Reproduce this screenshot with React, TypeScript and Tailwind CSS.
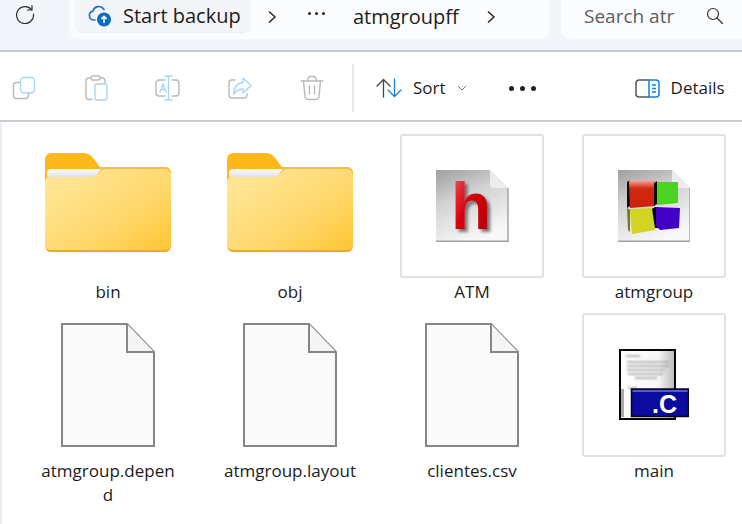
import type { ReactNode } from "react";

const GREY = "#b9b9b9";
const BLUE = "#a9d4f5";

function ToolIcon({ children }: { children: ReactNode }) {
	return (
		<svg width="26" height="26" viewBox="0 0 26 26" fill="none" strokeWidth="1.400" strokeLinecap="round" strokeLinejoin="round">
			{children}
		</svg>
	);
}

function CopyIcon() {
	return (
		<ToolIcon>
			<path d="M9 7.500H5.500A3 3 0 0 0 2.500 10.500V20.500A3 3 0 0 0 5.500 23.500H14.500A3 3 0 0 0 17.500 20.500V18" stroke={GREY} />
			<rect x="9.500" y="2.500" width="14" height="15.500" rx="3.500" stroke={BLUE} />
		</ToolIcon>
	);
}

function PasteIcon() {
	return (
		<ToolIcon>
			<path d="M9 24.500H6A3 3 0 0 1 3 21.500V6A3 3 0 0 1 6 3H8M17 3H19A3 3 0 0 1 22 6V8" stroke={GREY} />
			<rect x="8" y="1" width="9" height="4" rx="1.500" stroke={GREY} />
			<rect x="12" y="9" width="12" height="16" rx="2" stroke={BLUE} />
		</ToolIcon>
	);
}

function RenameIcon() {
	return (
		<ToolIcon>
			<path d="M10 5H4A3 3 0 0 0 1 8V18A3 3 0 0 0 4 21H10M17 5H21A3 3 0 0 1 24 8V18A3 3 0 0 1 21 21H17" stroke={GREY} />
			<path d="M10 1H17M13.500 1V25M10 25H17" stroke={BLUE} />
			<path d="M5 17L8 9L11 17M6 14.500H10" stroke={BLUE} />
		</ToolIcon>
	);
}

function ShareIcon() {
	return (
		<ToolIcon>
			<path d="M8 5H5A3 3 0 0 0 2 8V20A3 3 0 0 0 5 23H17A3 3 0 0 0 20 20V19" stroke={GREY} />
			<path d="M16 3L24 10.500L16 18V14C11 14 9 15.500 6.500 19C7 12.500 10 8 16 7.500Z" stroke={BLUE} />
		</ToolIcon>
	);
}

function TrashIcon() {
	return (
		<ToolIcon>
			<path d="M2 6H24M9 6V4A2.500 2.500 0 0 1 11.500 1.500H14.500A2.500 2.500 0 0 1 17 4V6" stroke={GREY} />
			<path d="M4.500 6L6 22A3 3 0 0 0 9 24.500H17A3 3 0 0 0 20 22L21.500 6M10.500 11V19M15.500 11V19" stroke={GREY} />
		</ToolIcon>
	);
}

function Folder({ id }: { id: string }) {
	return (
		<svg width="126" height="99" viewBox="0 0 126 99" className="mt-[19px]">
			<defs>
				<linearGradient id={`front-${id}`} x1="0.05" y1="0.1" x2="0.95" y2="0.95">
					<stop offset="0" stopColor="#ffe698" />
					<stop offset="0.6" stopColor="#ffd86c" />
					<stop offset="1" stopColor="#ffc738" />
				</linearGradient>
				<linearGradient id={`paper-${id}`} x1="0" y1="0" x2="0" y2="1">
					<stop offset="0" stopColor="#fbfbfb" />
					<stop offset="1" stopColor="#e2e2e2" />
				</linearGradient>
			</defs>
			<path d="M0 6A6 6 0 0 1 6 0H38C43 0 46 2 49 6L55 14H120A6 6 0 0 1 126 20V30H0Z" fill="#fdb91b" />
			<path d="M55 14H120A6 6 0 0 1 126 20V30H45Z" fill="#f5bd46" />
			<path d="M2 24V20A4 4 0 0 1 6 16H56L50 24Z" fill={`url(#paper-${id})`} />
			<path d="M0 99V29A5 5 0 0 1 5 24H45C49 24 52 22 55 19C56 18 57 16 60 16H120A6 6 0 0 1 126 22V93A6 6 0 0 1 120 99H6A6 6 0 0 1 0 93Z" fill={`url(#front-${id})`} />
			<path d="M0 92V93A6 6 0 0 0 6 99H120A6 6 0 0 0 126 93V92A5 5 0 0 1 121 97H5A5 5 0 0 1 0 92Z" fill="#eaaa2d" />
		</svg>
	);
}

function BlankDoc() {
	return (
		<svg width="94" height="124" viewBox="0 0 94 124" className="mt-[10px]">
			<path d="M1 1H66L93 29V123H1Z" fill="#fafafa" stroke="#868684" strokeWidth="2" />
			<path d="M66 1V29H93" fill="#f5f5f5" stroke="#868684" strokeWidth="2" />
		</svg>
	);
}

function PageBack({ id }: { id: string }) {
	return (
		<>
			<defs>
				<linearGradient id={`page-${id}`} x1="0.1" y1="0" x2="0.5" y2="1">
					<stop offset="0" stopColor="#a3a3a3" />
					<stop offset="0.4" stopColor="#d2d2d2" />
					<stop offset="1" stopColor="#f8f8f8" />
				</linearGradient>
			</defs>
			<path d="M0 0H54L72 18V72H0Z" fill={`url(#page-${id})`} />
			<path d="M54 0L72 18H57Q54 18 54 15Z" fill="#ececec" />
			<path d="M72 18V72" stroke="#a5a5a5" strokeWidth="1.500" />
			<rect x="0" y="70.500" width="72" height="1.500" fill="#a0a0a0" />
		</>
	);
}

function HeaderFileIcon() {
	return (
		<svg width="72" height="72" viewBox="0 0 72 72" className="overflow-visible">
			<defs>
				<linearGradient id="h-red" x1="0" y1="0" x2="1" y2="1">
					<stop offset="0" stopColor="#f0606a" />
					<stop offset="0.45" stopColor="#d8000c" />
					<stop offset="1" stopColor="#a80008" />
				</linearGradient>
				<filter id="h-shadow" x="-30%" y="-30%" width="170%" height="170%">
					<feDropShadow dx="3" dy="3" stdDeviation="1.800" floodColor="#444" floodOpacity="0.7" />
				</filter>
			</defs>
			<PageBack id="h" />
			<text x="15" y="59" fontFamily="'Liberation Sans', sans-serif" fontWeight="700" fontSize="66" fill="url(#h-red)" filter="url(#h-shadow)">h</text>
		</svg>
	);
}

function ProjectFileIcon() {
	return (
		<svg width="72" height="72" viewBox="0 0 72 72">
			<defs>
				<linearGradient id="red-top" x1="0" y1="0" x2="0" y2="1">
					<stop offset="0" stopColor="#f4b0a8" />
					<stop offset="0.3" stopColor="#d32a12" />
					<stop offset="1" stopColor="#cc200c" />
				</linearGradient>
				<filter id="cube-soft">
					<feGaussianBlur stdDeviation="0.400" />
				</filter>
			</defs>
			<PageBack id="p" />
			<g filter="url(#cube-soft)">
				<path d="M9 12L12 10V36L9 38Z" fill="#111" />
				<path d="M11 11Q11 10 13 10H37V36L12 38Z" fill="url(#red-top)" />
				<path d="M36 13L39 11V34L36 36Z" fill="#111" />
				<path d="M39 12H60V33L39 35Z" fill="#48d424" />
				<path d="M9 38L12 40V62L10 60Z" fill="#7a7a10" />
				<path d="M12 39L37 38V60L14 64Z" fill="#d2d320" />
				<path d="M34 39L37 37H40V58L37 58Z" fill="#050505" />
				<path d="M38 37L62 38L61 58L42 60L38 56Z" fill="#4200c4" />
			</g>
		</svg>
	);
}

function SourceFileIcon() {
	return (
		<svg width="70" height="72" viewBox="0 0 70 72">
			<defs>
				<linearGradient id="c-page" x1="0" y1="0" x2="1" y2="0">
					<stop offset="0" stopColor="#ffffff" />
					<stop offset="0.7" stopColor="#f6f6f6" />
					<stop offset="1" stopColor="#b9b9b9" />
				</linearGradient>
				<filter id="lines">
					<feGaussianBlur stdDeviation="0.800" />
				</filter>
			</defs>
			<rect x="1" y="1" width="55" height="69" fill="url(#c-page)" stroke="#050505" strokeWidth="2" />
			<g stroke="#a0a0a0" strokeWidth="1.500" filter="url(#lines)">
				<path d="M7 7H21M8 13H50M8 17H50M8 21H46M9 25H44M16 29H38M9 39H18" />
			</g>
			<rect x="2" y="40" width="3" height="28" fill="#a9a9a9" />
			<rect x="12.500" y="40" width="57" height="27.500" fill="#0b0ba0" stroke="#060618" strokeWidth="1.500" />
			<rect x="13.500" y="41" width="55" height="2" fill="#5a5ac4" />
			<text x="33" y="64" fontFamily="'Liberation Sans', sans-serif" fontWeight="700" fontSize="25" fill="#ffffff">.C</text>
		</svg>
	);
}

function Item({ name, icon, tile }: { name: ReactNode; icon: ReactNode; tile?: boolean }) {
	return (
		<div className="flex h-[179px] w-[144px] flex-col items-center">
			<div className={`flex h-[144px] w-[144px] shrink-0 justify-center ${tile ? "items-center rounded-[3px] border-2 border-[#e2e2e2]" : "items-start"}`}>
				{icon}
			</div>
			<div className="mt-[2px] text-center text-[17px] leading-[24px] text-[#1b1b1b]">{name}</div>
		</div>
	);
}

export default function App() {
	return (
		<div className="h-[524px] w-[742px] overflow-hidden bg-white font-['Open_Sans','Noto_Sans',sans-serif] text-[#1c1c1c]">
			{/* address bar */}
			<div className="flex h-[52px] border-b-2 border-[#c7cbd4] bg-[#f2f5f9]">
				<div className="flex h-[28px] w-[70px] items-center justify-center">
					<svg width="20" height="20" viewBox="0 0 20 20" fill="none" stroke="#303030" strokeWidth="1.200" className="ml-[-20px]">
						<path d="M16.500 5.500A8.500 8.500 0 1 0 18.500 10" strokeLinecap="round" />
						<path d="M17 1.500V6H12.500" strokeLinecap="round" strokeLinejoin="round" />
					</svg>
				</div>
				<div className="flex h-[39px] w-[479px] rounded-b-lg bg-[#fbfcfe] pl-[5px]">
					<div className="flex h-[33px] w-[176px] items-center rounded-b-lg border-b border-[#e9ebee] bg-[#f3f5f8] pl-[13px]">
						<svg width="24" height="22" viewBox="0 0 24 22" fill="none">
							<path d="M7 15H5.500A4.500 4.500 0 0 1 5 6.100A6 6 0 0 1 16 4.500" stroke="#1a73c8" strokeWidth="1.600" strokeLinecap="round" />
							<circle cx="16" cy="14.500" r="7" fill="#0a6cc4" />
							<path d="M16 18V11.500M13.300 14L16 11.300L18.700 14" stroke="#ffffff" strokeWidth="1.600" />
						</svg>
						<span className="ml-[11px] text-[20px] leading-none">Start backup</span>
					</div>
					<div className="flex h-[33px] items-center">
						<svg width="10" height="14" viewBox="0 0 10 14" fill="none" stroke="#222" strokeWidth="1.400" className="ml-[16px]">
							<path d="M2 1.500L8 7L2 12.500" />
						</svg>
						<div className="ml-[31px] flex gap-[4px] pb-[6px]">
							<span className="size-[3px] rounded-full bg-[#222]" />
							<span className="size-[3px] rounded-full bg-[#222]" />
							<span className="size-[3px] rounded-full bg-[#222]" />
						</div>
						<span className="ml-[28px] text-[20px] leading-none">atmgroupff</span>
						<svg width="10" height="14" viewBox="0 0 10 14" fill="none" stroke="#222" strokeWidth="1.400" className="ml-[27px]">
							<path d="M2 1.500L8 7L2 12.500" />
						</svg>
					</div>
				</div>
				<div className="ml-[12px] flex h-[39px] w-[181px] rounded-bl-lg bg-[#fbfcfe] pl-[23px]">
					<div className="flex h-[31px] items-center">
						<span className="w-[91px] whitespace-nowrap text-[19px] leading-[24px] text-[#5e5e5e]">Search atr</span>
						<svg width="18" height="18" viewBox="0 0 18 18" fill="none" stroke="#333" strokeWidth="1.200" className="ml-[31px]">
							<circle cx="7" cy="7" r="5.500" />
							<path d="M11 11L16.500 16.500" strokeLinecap="round" />
						</svg>
					</div>
				</div>
			</div>

			{/* command bar */}
			<div className="flex h-[70px] items-center border-b-2 border-[#c8ccd4] pt-[4px]">
				<div className="flex gap-6">
					{[<CopyIcon key="copy" />, <PasteIcon key="paste" />, <RenameIcon key="rename" />, <ShareIcon key="share" />, <TrashIcon key="trash" />].map((icon) => (
						<div key={icon.key} className="flex w-12 justify-center">
							{icon}
						</div>
					))}
				</div>
				<div className="ml-4 h-[48px] w-[2px] bg-[#e7e7e7]" />
				<svg width="26" height="20" viewBox="0 0 26 20" fill="none" strokeWidth="1.300" strokeLinecap="round" strokeLinejoin="round" className="ml-[22px]">
					<path d="M7.500 19V1.500M1 8L7.500 1.500L14 8" stroke="#444" />
					<path d="M18.500 1V18.500M12 12L18.500 18.500L25 12" stroke="#1681d8" />
				</svg>
				<span className="mb-[2px] ml-[11px] text-[17px] leading-none">Sort</span>
				<svg width="10" height="6" viewBox="0 0 10 6" fill="none" stroke="#777" strokeWidth="1" className="ml-[11px]">
					<path d="M1 1L5 5L9 1" />
				</svg>
				<div className="ml-[42px] flex gap-[6px]">
					<span className="size-[5px] rounded-full bg-[#222]" />
					<span className="size-[5px] rounded-full bg-[#222]" />
					<span className="size-[5px] rounded-full bg-[#222]" />
				</div>
				<svg width="25" height="19" viewBox="0 0 25 19" fill="none" className="ml-[99px]">
					<path d="M14 1H4A3 3 0 0 0 1 4V15A3 3 0 0 0 4 18H14" stroke="#555" strokeWidth="1.500" />
					<path d="M14 1H21A3 3 0 0 1 24 4V15A3 3 0 0 1 21 18H14Z" stroke="#1681d8" strokeWidth="1.500" />
					<path d="M17 6H21M17 9.500H21M17 13H21" stroke="#1681d8" strokeWidth="1.300" />
				</svg>
				<span className="mb-[2px] ml-[11px] text-[17px] leading-none">Details</span>
			</div>

			{/* file grid */}
			<div className="h-[402px] border-l-2 border-[#eeeeee] pl-[34px] pt-[12px]">
				<div className="grid grid-cols-[repeat(4,144px)] gap-x-[38px]">
					<Item name="bin" icon={<Folder id="bin" />} />
					<Item name="obj" icon={<Folder id="obj" />} />
					<Item name="ATM" tile icon={<HeaderFileIcon />} />
					<Item name="atmgroup" tile icon={<ProjectFileIcon />} />
					<Item name={<>atmgroup.depen<br />d</>} icon={<BlankDoc />} />
					<Item name="atmgroup.layout" icon={<BlankDoc />} />
					<Item name="clientes.csv" icon={<BlankDoc />} />
					<Item name="main" tile icon={<SourceFileIcon />} />
				</div>
			</div>
		</div>
	);
}
